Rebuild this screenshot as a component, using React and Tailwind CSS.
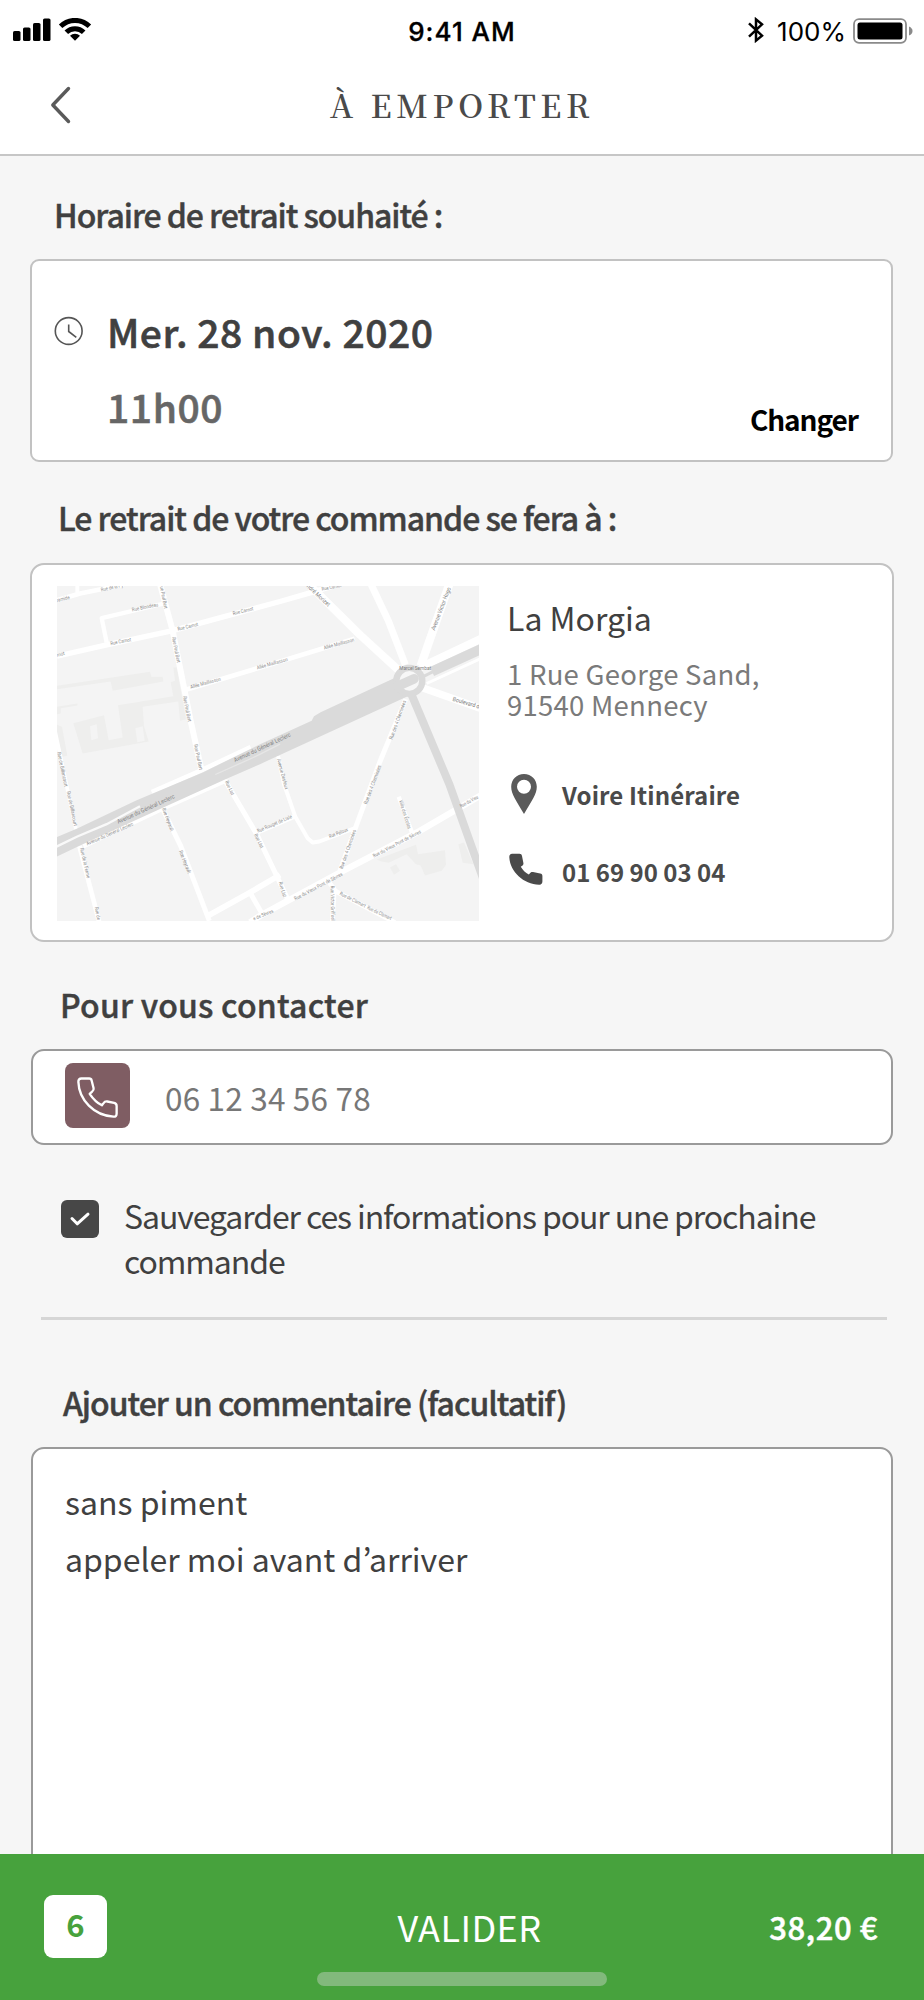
import React, { useState } from 'react'

const SANS = "font-['Noto_Sans_CJK_KR','Noto_Sans',sans-serif]"
const HEADING = 'text-[32px] leading-[40px] font-medium [-webkit-text-stroke:0.4px]'

// white streets: [points, width]
const streets = [
  ['51,88 120,68 250,42', 14],
  ['112,40 112,66', 12],
  ['360,40 398,180 432,350 452,450 485,600', 18],
  ['372,98 185,142 200,215', 13],
  ['51,256 200,222 395,180 720,92 810,66 890,42', 16],
  ['440,356 720,272 944,204', 14],
  ['335,664 480,600 632,529', 14],
  ['130,826 370,712 560,628', 14],
  ['812,46 960,192 1080,302', 24],
  ['993,40 1045,150 1096,282', 21],
  ['1228,40 1142,285', 25],
  ['1140,290 1325,203', 24],
  ['1160,338 1325,262', 9],
  ['1145,350 1325,414', 22],
  ['1097,385 1020,572 945,775 900,900', 15],
  ['1325,672 1140,780 900,905 660,1035 630,1055', 19],
  ['1076,678 1116,785', 13],
  ['945,772 838,812 818,815 803,802 766,738 732,640 714,555', 12],
  ['766,736 650,786', 13],
  ['555,628 650,790 710,915 748,995', 15],
  ['365,708 422,825 508,1050', 15],
  ['500,1037 630,965 720,912', 17],
  ['630,965 668,1032', 15],
  ['118,825 178,1055', 14],
  ['45,480 112,795', 11],
  ['865,932 883,955 877,1055', 14],
  ['885,960 1065,1055', 14],
]

const blocks = [
  '51,345 330,303 334,318 368,318 370,332 218,360 212,332 51,355',
  '51,408 112,398 112,404 62,412 62,428 51,430',
  '100,457 192,433 206,508 248,500 234,403 400,376 392,334 405,330 400,290 410,290 438,445 420,450 415,392 308,408 312,466 326,512 128,548',
  '51,462 66,468 82,555 68,558 51,500',
  '1010,866 1128,822 1134,850 1215,838 1218,882 1205,900 1155,914 1142,884 1128,880 1100,850 1046,876 1024,872',
  '1050,890 1068,880 1080,900 1062,912',
  '1255,820 1272,815 1300,880 1268,876',
]

// street names with the two ends of their baseline
const streetNames = [
  ['ramide', 51, 94, 90, 84],
  ['Rue de la Py', 184, 62, 250, 48],
  ['Rue Blondeau', 277, 122, 355, 106],
  ['ue Paul Bert', 360, 48, 373, 114],
  ['Rue Carnot', 212, 223, 274, 211],
  ['Rue Carnot', 414, 180, 475, 165],
  ['Rue Carnot', 580, 133, 641, 118],
  ['rnot', 51, 258, 75, 252],
  ['Rue Paul Bert', 396, 200, 411, 276],
  ['Rue Paul Bert', 429, 377, 444, 453],
  ['Rue Paul Bert', 462, 522, 478, 598],
  ['Allée Maillasson', 452, 354, 543, 329],
  ['Allée Maillasson', 652, 296, 744, 270],
  ['Allée Maillasson', 853, 236, 944, 211],
  ['Rue de Billancourt', 52, 545, 74, 648],
  ['Rue de Billancourt', 80, 663, 102, 766],
  ['Avenue du Général Leclerc', 142, 824, 281, 763],
  ['Rue de la Ferme', 120, 833, 141, 923],
  ['Rue de', 164, 1010, 172, 1048],
  ['Rue Heyrault', 366, 714, 392, 782],
  ['Rue Heyrault', 417, 841, 444, 909],
  ['Rue List', 555, 633, 574, 674],
  ['Rue List', 642, 792, 662, 833],
  ['Rue List', 716, 935, 730, 980],
  ['Rue Rouget de Lisle', 654, 786, 757, 741],
  ['Avenue Desfeux', 711, 566, 735, 656],
  ['Rue Pelloux', 869, 802, 925, 781],
  ['Rue des 4 Cheminées', 1057, 507, 1099, 391],
  ['Rue des 4 Cheminées', 981, 701, 1024, 585],
  ['Rue des 4 Cheminées', 908, 895, 949, 779],
  ['Villa des Écoles', 1077, 690, 1104, 775],
  ['Rue du Vieux Pont de Sèvres', 1002, 861, 1144, 786],
  ['Rue du Vieux Pont de Sèvres', 766, 989, 909, 913],
  ['Rue du Vieu', 1263, 711, 1316, 682],
  ['e de Sèvres', 642, 1049, 701, 1024],
  ['Rue Victor Griffuel', 872, 945, 874, 1049],
  ['Rue de Clamart', 898, 972, 974, 1010],
  ['Rue de Clamart', 980, 1014, 1052, 1048],
  ['Rue Carnot', 846, 60, 905, 48],
]

const avenueNames = [
  ['Avenue du Général Leclerc', 235, 759, 405, 681],
  ['Avenue du Général Leclerc', 585, 574, 753, 496],
  ['ndré Morizet', 799, 48, 864, 108],
  ['Avenue Victor Hugo', 1184, 180, 1233, 52],
  ['Boulevard d', 1237, 390, 1317, 413],
  ['Marcel Sembat', 1078, 297, 1173, 297],
]

function StreetName({ name, size, fill }) {
  const [text, x1, y1, x2, y2] = name
  const angle = (Math.atan2(y2 - y1, x2 - x1) * 180) / Math.PI
  return (
    <text
      transform={`translate(${x1} ${y1}) rotate(${angle})`}
      textLength={Math.hypot(x2 - x1, y2 - y1)}
      lengthAdjust="spacingAndGlyphs"
      fontSize={size}
      fill={fill}
    >
      {text}
    </text>
  )
}

function Map() {
  return (
    <svg viewBox="51 46 1266 1004" className="w-[422px] h-[335px] shrink-0 bg-[#f4f4f4] font-['Roboto',sans-serif]">
      {blocks.map((points) => (
        <polygon key={points} points={points} fill="#eeeeed" />
      ))}
      <polygon points="150,466 170,460 174,502 154,508" fill="#f4f4f4" />
      <polygon points="286,472 308,466 314,510 292,514" fill="#f4f4f4" />
      <g fill="none" stroke="#fff" strokeLinejoin="round">
        {streets.map(([points, width]) => (
          <polyline key={points} points={points} strokeWidth={width} />
        ))}
      </g>
      {/* avenue */}
      <polygon
        fill="#dadada"
        points="40,803 110,774 290,688 490,604 660,520 815,450 822,436 842,424 1062,322 1100,378 660,580 560,624 370,710 125,822 40,862"
      />
      <polyline points="40,832 112,797 200,760 300,706" fill="none" stroke="#f9f9f9" strokeWidth="7" />
      <polyline points="526,611 640,560 720,520" fill="none" stroke="#e6e6e6" strokeWidth="4" />
      <polyline points="1148,318 1200,292" fill="none" stroke="#dadada" strokeWidth="9" />
      <polyline points="1176,302 1325,234" fill="none" stroke="#dadada" strokeWidth="30" />
      <polyline points="1114,370 1228,640 1330,925" fill="none" stroke="#dadada" strokeWidth="24" />
      {/* roundabout */}
      <circle cx="1108" cy="330" r="39" fill="#f7f7f7" stroke="#dadada" strokeWidth="19" />
      <polyline points="1075,345 1122,324" fill="none" stroke="#dadada" strokeWidth="29" strokeLinecap="round" />
      {streetNames.map((name, i) => (
        <StreetName key={i} name={name} size={15.5} fill="#8c8c8c" />
      ))}
      {avenueNames.map((name, i) => (
        <StreetName key={i} name={name} size={18} fill="#808080" />
      ))}
    </svg>
  )
}

function StatusBar() {
  return (
    <div className="h-[63px] flex items-center font-['Inter',sans-serif] text-[26px] text-black">
      <div className="flex-1 pl-[13px]">
        <svg viewBox="0 0 80 24" className="w-[80px] h-[24px] -mt-[3px]">
          <rect x="0" y="13" width="7.5" height="10" rx="1.6" />
          <rect x="10" y="9.5" width="7.5" height="13.5" rx="1.6" />
          <rect x="20" y="5" width="7.5" height="18" rx="1.6" />
          <rect x="30" y="0.5" width="7.5" height="22.5" rx="1.6" />
          <g fill="none" stroke="#000" strokeWidth="5">
            <path d="M47.6 8.3A20.5 20.5 0 0 1 76.4 8.3" />
            <path d="M53.3 14.3A12.4 12.4 0 0 1 70.7 14.3" />
          </g>
          <path d="M62 22.8L57 17.8A7.2 7.2 0 0 1 67 17.8Z" />
        </svg>
      </div>
      <p className="font-medium pr-[2px] tracking-[1px] [-webkit-text-stroke:0.3px]">9:41 AM</p>
      <div className="flex-1 flex items-center justify-end pr-[11px]">
        <svg viewBox="0 0 16 26" className="w-[16px] h-[26px] mr-[13px] -mt-[3px]" fill="none" stroke="#000" strokeWidth="2.5">
          <path d="M1 6.3L14 18.7L8 23.6V2.4L14 7.3L1 19.7" />
        </svg>
        <span className="mr-[7px]">100%</span>
        <svg viewBox="0 0 60 26" className="w-[60px] h-[26px] -mt-[1px]">
          <rect x="1" y="1.2" width="52" height="23.6" rx="5" fill="none" stroke="#8a8a8a" strokeWidth="1.8" />
          <rect x="4.5" y="4.5" width="45" height="17" rx="2.5" />
          <path d="M56 8.5Q59.5 10 59.5 13T56 17.5Z" fill="#8a8a8a" />
        </svg>
      </div>
    </div>
  )
}

function App() {
  const [phone, setPhone] = useState('06 12 34 56 78')
  const [save, setSave] = useState(true)
  const [comment, setComment] = useState('sans piment\nappeler moi avant d’arriver')

  return (
    <div className={`w-[924px] h-[2000px] flex flex-col overflow-hidden bg-[#f6f6f6] text-[#404040] ${SANS}`}>
      <header className="h-[156px] shrink-0 bg-white border-b-2 border-[#c6c6c6]">
        <StatusBar />
        <div className="h-[87px] flex items-center">
          <button className="w-[120px] pl-[50px] pb-[3px]">
            <svg viewBox="0 0 22 38" className="w-[22px] h-[38px]" fill="none" stroke="#5a5a5a" strokeWidth="3.4" strokeLinecap="round" strokeLinejoin="round">
              <path d="M18.5 2.5L2.8 19L18.5 35.5" />
            </svg>
          </button>
          <h1 className="flex-1 pb-[5px] text-center font-['Noto_Serif_CJK_SC','Liberation_Serif',serif] font-semibold text-[32px] leading-[40px] tracking-[4.6px] text-[#4a4a4a]">
            À EMPORTER
          </h1>
          <div className="w-[120px]" />
        </div>
      </header>

      <main className="flex-1 min-h-0 overflow-hidden px-[30px]">
        <h2 className={`mt-[38px] ml-[24px] tracking-[-1.06px] ${HEADING}`}>Horaire de retrait souhaité :</h2>
        <section className="mt-[25px] mr-[1px] h-[203px] flex bg-white border-2 border-[#c2c2c2] rounded-[9px]">
          <svg viewBox="0 0 30 30" className="w-[30px] h-[30px] mt-[55px] ml-[22px] shrink-0" fill="none" stroke="#555" strokeWidth="1.6">
            <circle cx="14.7" cy="15" r="13.4" />
            <path d="M14.7 8.5V15.5L22.3 21.3" />
          </svg>
          <div className="flex-1 pt-[46px] pl-[23px] text-[39px] leading-[48px] font-medium [-webkit-text-stroke:0.6px]">
            <p className="tracking-[0.5px]">Mer. 28 nov. 2020</p>
            <p className="mt-[27px] tracking-[0.6px] text-[#666]">11h00</p>
          </div>
          <button className="self-end mb-[21px] mr-[33px] text-[28px] leading-[40px] font-bold tracking-[-1.05px] text-black">Changer</button>
        </section>

        <h2 className={`mt-[35px] ml-[28px] tracking-[-1.04px] ${HEADING}`}>Le retrait de votre commande se fera à :</h2>
        <section className="mt-[26px] h-[379px] flex pt-[21px] pl-[25px] bg-white border-2 border-[#c2c2c2] rounded-[14px]">
          <Map />
          <div className="pl-[28px] pt-[11px]">
            <h3 className="text-[32px] leading-[40px]">La Morgia</h3>
            <p className="mt-[21px] text-[27.5px] leading-[31.3px] tracking-[0.26px] text-[#7a7a7a]">
              1 Rue George Sand,
              <br />
              91540 Mennecy
            </p>
            <a className="mt-[54px] h-[40px] flex items-center text-[24px] font-bold tracking-[0.12px] text-[#4a4a4a]">
              <svg viewBox="0 0 26 40" className="w-[26px] h-[40px] ml-[4px] mr-[25px] -mt-[2px]" fill="#5a5a5a">
                <path fillRule="evenodd" d="M13 0C5.6 0 .2 5.6 .2 12.8C.2 20 5 26.5 13 40C21 26.5 25.8 20 25.8 12.8C25.8 5.6 20.4 0 13 0ZM13 5.8A7 7 0 1 1 13 19.8A7 7 0 1 1 13 5.8Z" />
              </svg>
              Voire Itinéraire
            </a>
            <a className="mt-[37px] h-[40px] flex items-center text-[24px] font-bold text-[#4a4a4a]">
              <svg viewBox="0 0 34 32" className="w-[34px] h-[32px] ml-[2px] mr-[19px] -mt-[5px]" fill="#4a4a4a">
                <path d="M3.2 .8H10.5C12 .8 12.7 1.6 13 3L14.4 10C14.6 11.3 14.1 12.2 12.8 13L11.8 13.7C13.6 16.8 16.4 19.7 19.8 21.5L21 20.2C21.8 19.2 22.6 18.9 24 19.1L31.2 20.4C32.7 20.7 33.4 21.4 33.4 23V28.6C33.4 30.6 32.2 31.8 30.2 31.7C14.5 31 1.2 19 .3 4.2C.2 2.2 1.2 .8 3.2 .8Z" />
              </svg>
              01 69 90 03 04
            </a>
          </div>
        </section>

        <h2 className={`mt-[42px] ml-[30px] tracking-[0.2px] ${HEADING}`}>Pour vous contacter</h2>
        <section className="mt-[25px] mx-[1px] h-[96px] flex bg-white border-2 border-[#9a9a9a] rounded-[13px]">
          <div className="w-[65px] h-[65px] mt-[12px] ml-[32px] shrink-0 rounded-[8px] bg-[#7f5d63] flex items-center justify-center">
            <svg viewBox="0 0 42 42" className="w-[41px] h-[41px] mt-[4px] mr-[1px]" fill="none" stroke="#fff" strokeWidth="2.4" strokeLinejoin="round">
              <path d="M4.5 1.5H12.5C14 1.5 14.7 2.2 15 3.5L17 11.5C17.3 13 16.8 14 15.5 15L13 17.2C16.5 22.5 20 26.2 25.5 29L27 27C28.2 25.3 29.2 24.8 31 25.1L38 26.6C39.8 27 40.6 28 40.6 29.6V37.5C40.6 39.8 39.5 40.8 37.3 40.6C17.5 39.5 2 23.5 1.4 5C1.3 2.8 2.5 1.5 4.5 1.5Z" />
            </svg>
          </div>
          <input
            value={phone}
            onChange={(e) => setPhone(e.target.value)}
            className="flex-1 mt-[26px] h-[40px] ml-[35px] bg-transparent text-[31.5px] leading-[40px] tracking-[0.2px] text-[#777] outline-none"
          />
        </section>

        <div className="mt-[48px] ml-[31px] flex items-start">
          <button
            onClick={() => setSave(!save)}
            className="mt-[7px] w-[38px] h-[38px] rounded-[6px] bg-[#474747] flex items-center justify-center"
          >
            {save && (
              <svg viewBox="0 0 38 38" className="w-[38px] h-[38px]" fill="none" stroke="#fff" strokeWidth="3" strokeLinecap="round" strokeLinejoin="round">
                <path d="M11 18.5L16.2 23.8L27 14.2" />
              </svg>
            )}
          </button>
          <p className="ml-[25px] text-[32px] leading-[44.7px] tracking-[-1.1px] whitespace-nowrap">
            Sauvegarder ces informations pour une prochaine
            <br />
            commande
          </p>
        </div>

        <hr className="mt-[35px] mb-[62px] ml-[11px] mr-[7px] border-0 h-[3px] bg-[#d6d6d6]" />

        <h2 className={`ml-[33px] tracking-[-1.03px] ${HEADING}`}>Ajouter un commentaire (facultatif)</h2>
        <textarea
          value={comment}
          onChange={(e) => setComment(e.target.value)}
          className="block mt-[25px] ml-[1px] w-[862px] h-[480px] pt-[24px] pl-[32px] resize-none overflow-hidden bg-white border-2 border-[#9a9a9a] rounded-[13px] text-[32px] leading-[56.3px] outline-none"
        />
      </main>

      <footer className="h-[146px] shrink-0 bg-[#47a23d] text-white">
        <div className="pt-[41px] px-[46px] flex items-center">
          <div className="flex-1 -ml-[2px]">
            <div className="w-[63px] h-[63px] pb-[4px] rounded-[9px] bg-white flex items-center justify-center text-[31px] font-bold text-[#47a23d]">6</div>
          </div>
          <button className="pl-[17px] pb-[2px] text-[36px] leading-[40px] tracking-[0.45px]">VALIDER</button>
          <p className="flex-1 text-right text-[31px] leading-[40px] font-medium tracking-[0.6px] [-webkit-text-stroke:0.5px]">38,20 €</p>
        </div>
        <div className="mt-[14px] mx-auto w-[290px] h-[14px] rounded-full bg-[#82b97c]" />
      </footer>
    </div>
  )
}

export default App
